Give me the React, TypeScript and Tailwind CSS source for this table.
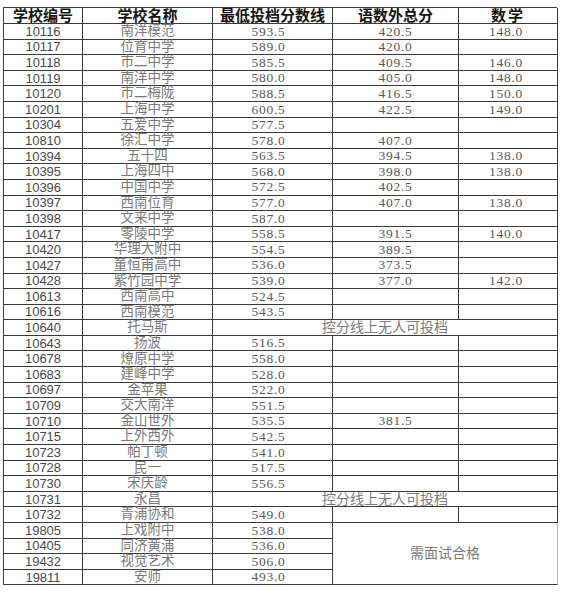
import React from 'react'

type Row = {
  code: string
  name: string
  min?: string
  total?: string
  math?: string
  note?: 'none' | 'interview-start' | 'interview'
}

const ROWS: Row[] = [
  { code: '10116', name: '南洋模范', min: '593.5', total: '420.5', math: '148.0' },
  { code: '10117', name: '位育中学', min: '589.0', total: '420.0' },
  { code: '10118', name: '市二中学', min: '585.5', total: '409.5', math: '146.0' },
  { code: '10119', name: '南洋中学', min: '580.0', total: '405.0', math: '148.0' },
  { code: '10120', name: '市二梅陇', min: '588.5', total: '416.5', math: '150.0' },
  { code: '10201', name: '上海中学', min: '600.5', total: '422.5', math: '149.0' },
  { code: '10304', name: '五爱中学', min: '577.5' },
  { code: '10810', name: '徐汇中学', min: '578.0', total: '407.0' },
  { code: '10394', name: '五十四', min: '563.5', total: '394.5', math: '138.0' },
  { code: '10395', name: '上海四中', min: '568.0', total: '398.0', math: '138.0' },
  { code: '10396', name: '中国中学', min: '572.5', total: '402.5' },
  { code: '10397', name: '西南位育', min: '577.0', total: '407.0', math: '138.0' },
  { code: '10398', name: '文来中学', min: '587.0' },
  { code: '10417', name: '零陵中学', min: '558.5', total: '391.5', math: '140.0' },
  { code: '10420', name: '华理大附中', min: '554.5', total: '389.5' },
  { code: '10427', name: '董恒甫高中', min: '536.0', total: '373.5' },
  { code: '10428', name: '紫竹园中学', min: '539.0', total: '377.0', math: '142.0' },
  { code: '10613', name: '西南高中', min: '524.5' },
  { code: '10616', name: '西南模范', min: '543.5' },
  { code: '10640', name: '托马斯', note: 'none' },
  { code: '10643', name: '扬波', min: '516.5' },
  { code: '10678', name: '燎原中学', min: '558.0' },
  { code: '10683', name: '建峰中学', min: '528.0' },
  { code: '10697', name: '金苹果', min: '522.0' },
  { code: '10709', name: '交大南洋', min: '551.5' },
  { code: '10710', name: '金山世外', min: '535.5', total: '381.5' },
  { code: '10715', name: '上外西外', min: '542.5' },
  { code: '10723', name: '帕丁顿', min: '541.0' },
  { code: '10728', name: '民一', min: '517.5' },
  { code: '10730', name: '宋庆龄', min: '556.5' },
  { code: '10731', name: '永昌', note: 'none' },
  { code: '10732', name: '青浦协和', min: '549.0' },
  { code: '19805', name: '上戏附中', min: '538.0', note: 'interview-start' },
  { code: '10405', name: '同济黄浦', min: '536.0', note: 'interview' },
  { code: '19432', name: '视觉艺术', min: '506.0', note: 'interview' },
  { code: '19811', name: '安师', min: '493.0', note: 'interview' },
]

const cell = 'flex items-center justify-center border-r border-b border-[#3a3a3a] leading-none whitespace-nowrap'
const headCell = `${cell} font-['Noto_Sans_CJK_SC',sans-serif] font-bold text-[15px] text-[#151515] pb-[2px]`
const codeText = "font-['Liberation_Sans',Arial,sans-serif] text-[13px] text-[#4a4a4a]"
const nameText = "font-['Noto_Sans_CJK_SC',sans-serif] text-[13.5px] text-[#7a7a7a] pb-[3px]"
const numText = "font-['Liberation_Serif',serif] text-[13.5px] tracking-[0.7px] text-[#5a5a5a]"
const noteText = "font-['Noto_Sans_CJK_SC',sans-serif] text-[14px] text-[#7a7a7a] pb-[3px]"

export default function App() {
  return (
    <div className="w-[561px] h-[596px] bg-white pt-[7px] pl-[3px]">
      <div className="grid grid-cols-[79px_130px_120px_126px_99px] grid-rows-[16px_repeat(36,15.6px)] w-[554px] border-t border-l border-[#3a3a3a]">
        {/* Header */}
        <div className={headCell}>学校编号</div>
        <div className={headCell}>学校名称</div>
        <div className={headCell}>最低投档分数线</div>
        <div className={headCell}>语数外总分</div>
        <div className={`${headCell} tracking-[2px]`}>数学</div>

        {ROWS.map((r) => (
          <React.Fragment key={r.code}>
            <div className={`${cell} ${codeText}`}>{r.code}</div>
            <div className={`${cell} ${nameText}`}>{r.name}</div>
            {r.note === 'none' ? (
              <div className={`${cell} ${noteText} col-span-3`}>控分线上无人可投档</div>
            ) : (
              <>
                <div className={`${cell} ${numText} pr-[8px]`}>{r.min}</div>
                {r.note === 'interview-start' && (
                  <div className={`${cell} ${noteText} col-span-2 row-span-4 border-r-[#b5b5b5]`}>需面试合格</div>
                )}
                {!r.note && (
                  <>
                    <div className={`${cell} ${numText}`}>{r.total}</div>
                    <div className={`${cell} ${numText} pr-[4px]`}>{r.math}</div>
                  </>
                )}
              </>
            )}
          </React.Fragment>
        ))}
      </div>
    </div>
  )
}
